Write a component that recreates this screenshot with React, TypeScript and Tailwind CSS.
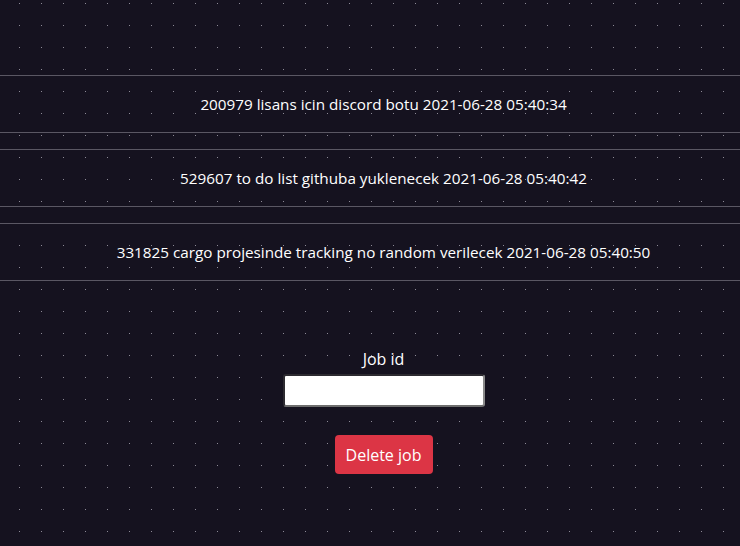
const jobs = [
  { id: 200979, name: "lisans icin discord botu", date: "2021-06-28 05:40:34" },
  { id: 529607, name: "to do list githuba yuklenecek", date: "2021-06-28 05:40:42" },
  { id: 331825, name: "cargo projesinde tracking no random verilecek", date: "2021-06-28 05:40:50" },
];

export default function App() {
  return (
    <div className="min-h-[546px] bg-[#15121f] bg-[radial-gradient(circle_at_19.5px_3.5px,#8d8a96_0.7px,transparent_0.9px)] bg-[size:22px_22px] pt-[75px] font-['Open_Sans',sans-serif] text-white">
      <ul className="flex flex-col gap-[16px]">
        {jobs.map((job) => (
          <li
            key={job.id}
            className="flex h-[58px] items-center justify-center border-y border-[#5a5763] pl-[27px] text-[15.25px]"
          >
            {job.id} {job.name} {job.date}
          </li>
        ))}
      </ul>

      <form className="mt-[66px] flex flex-col items-center pl-[27px]">
        <label className="text-[16px] leading-[24px]">Job id</label>
        <input
          type="text"
          className="mt-[3px] h-[33px] w-[202px] rounded-[3px] border-2 border-[#2c2a30] border-b-[#6e6e6e] border-r-[#8a8a8a] bg-white text-black outline-none"
        />
        <button
          type="button"
          className="mt-[28px] h-[39px] w-[98px] rounded bg-[#dc3545] text-[16px] text-white"
        >
          Delete job
        </button>
      </form>
    </div>
  );
}
